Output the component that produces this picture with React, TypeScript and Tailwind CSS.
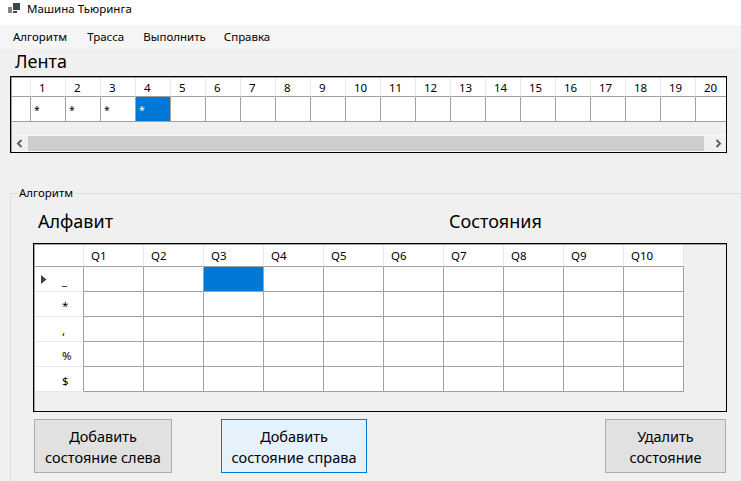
const tapeCols = Array.from({ length: 20 }, (_, i) => i + 1);
const states = Array.from({ length: 10 }, (_, i) => `Q${i + 1}`);
const rows = ["_", "*", ",", "%", "$"];

function TapeGrid() {
  return (
    <div className="grid h-[44px] w-[719px] shrink-0 grid-cols-[19px_repeat(20,35px)] grid-rows-[19px_25px]">
      <div className="border-r border-b border-r-[#e8e8e8] border-b-[#a0a0a0] bg-white" />
      {tapeCols.map((n) => (
        <div key={n} className="border-r border-b border-r-[#e8e8e8] border-b-[#a0a0a0] bg-white pl-[8px] text-[11.5px] leading-[19px] text-black">
          {n}
        </div>
      ))}
      <div className="border-r border-b border-r-[#a0a0a0] border-b-[#a0a0a0] bg-white" />
      {tapeCols.map((n) => (
        <div
          key={n}
          className={`border-r border-b border-[#a0a0a0] pl-[3px] text-[10.5px] leading-[26px] ${n === 4 ? "bg-[#0078d7] text-white" : "bg-white text-black"}`}
        >
          {n <= 4 ? "*" : ""}
        </div>
      ))}
    </div>
  );
}

function Chevron({ right }: { right?: boolean }) {
  return (
    <svg width="8" height="9" viewBox="0 0 8 9" className="shrink-0">
      <path d={right ? "M1.5 1l3.5 3.5L1.5 8" : "M6.5 1L3 4.5 6.5 8"} fill="none" stroke="#606060" strokeWidth="2" />
    </svg>
  );
}

function StateGrid() {
  return (
    <div className="grid w-[649px] grid-cols-[49px_repeat(10,60px)] grid-rows-[22px_repeat(5,25px)]">
      <div className="border-r border-b border-r-[#e8e8e8] border-b-[#a0a0a0] bg-white" />
      {states.map((s) => (
        <div key={s} className="border-r border-b border-r-[#e8e8e8] border-b-[#a0a0a0] bg-white pl-[7px] text-[11.5px] leading-[21px] text-black">
          {s}
        </div>
      ))}
      {rows.map((r, ri) => (
        <div key={r} className="contents">
          <div className="relative border-r border-b border-r-[#a0a0a0] border-b-[#e8e8e8] bg-white pl-[27px] text-[11.5px] leading-[27px] text-black">
            {ri === 0 && (
              <svg width="6" height="9" viewBox="0 0 6 9" className="absolute top-[8px] left-[6px]">
                <path d="M0 0l5.5 4.5L0 9z" fill="#404040" />
              </svg>
            )}
            {r}
          </div>
          {states.map((s, ci) => (
            <div key={s} className={`border-r border-b border-[#a0a0a0] ${ri === 0 && ci === 2 ? "bg-[#0078d7]" : "bg-white"}`} />
          ))}
        </div>
      ))}
    </div>
  );
}

function Btn({ lines, className }: { lines: string[]; className: string }) {
  return (
    <button className={`flex h-[54px] flex-col items-center justify-center border pt-[1px] text-[14.5px] leading-[21px] text-black ${className}`}>
      {lines.map((l) => (
        <span key={l}>{l}</span>
      ))}
    </button>
  );
}

export default function App() {
  return (
    <div className="h-[481px] w-[741px] overflow-hidden bg-[#f0f0f0] font-['Noto_Sans',sans-serif]">
      <div className="flex h-[25px] items-start bg-white pl-[8px]">
        <svg width="13" height="11" viewBox="0 0 13 11" className="mt-[3px]">
          <path d="M5 0h7v7H5z" fill="#3c4650" />
          <path d="M0 4h4v6H0z" fill="#7c848c" />
          <path d="M5 8h4v2H5z" fill="#3c4650" />
        </svg>
        <span className="mt-[1px] ml-[6px] text-[11.5px] leading-[16px] text-black">Машина Тьюринга</span>
      </div>
      <div className="flex h-[24px] items-center bg-[#f5f5f5] pl-[13px] text-[11.5px] text-black">
        <span>Алгоритм</span>
        <span className="ml-[20px]">Трасса</span>
        <span className="ml-[19px]">Выполнить</span>
        <span className="ml-[18px]">Справка</span>
      </div>
      <div className="h-[27px] pl-[15px] text-[18px] leading-[25px] text-black">Лента</div>
      <div className="ml-[10px] h-[77px] w-[717px] border border-black bg-[#f0f0f0]">
        <div className="flex h-full flex-col overflow-hidden border-t border-l border-t-[#a0a0a0] border-l-[#a0a0a0]">
          <TapeGrid />
          <div className="mt-[13px] flex h-[17px] shrink-0 items-center justify-between border-y border-[#fafafa] bg-[#f0f0f0] px-[3px]">
            <Chevron />
            <div className="mr-[11px] ml-[5px] h-[15px] flex-1 bg-[#cdcdcd]" />
            <Chevron right />
          </div>
        </div>
      </div>
      <fieldset className="mt-[33px] ml-[10px] h-[320px] border-t border-l border-[#dcdcdc]">
        <legend className="ml-[7px] px-[1px] text-[11.5px] leading-[14px] text-black">Алгоритм</legend>
        <div className="pl-[22px]">
          <div className="flex h-[43px] items-center pb-[1px] pl-[5px] text-[18px] text-black">
            <span className="w-[411px]">Алфавит</span>
            <span>Состояния</span>
          </div>
          <div className="h-[169px] w-[694px] border border-black">
            <div className="h-full border-t border-l border-t-[#a0a0a0] border-l-[#a0a0a0]">
              <StateGrid />
            </div>
          </div>
          <div className="mt-[7px] ml-[1px] flex w-[693px]">
            <Btn lines={["Добавить", "состояние слева"]} className="w-[138px] border-[#adadad] bg-[#e1e1e1]" />
            <Btn lines={["Добавить", "состояние справа"]} className="ml-[49px] w-[146px] border-[#0078d7] bg-[#e5f1fb]" />
            <Btn lines={["Удалить", "состояние"]} className="ml-[238px] w-[121px] border-[#adadad] bg-[#e1e1e1]" />
          </div>
        </div>
      </fieldset>
    </div>
  );
}
